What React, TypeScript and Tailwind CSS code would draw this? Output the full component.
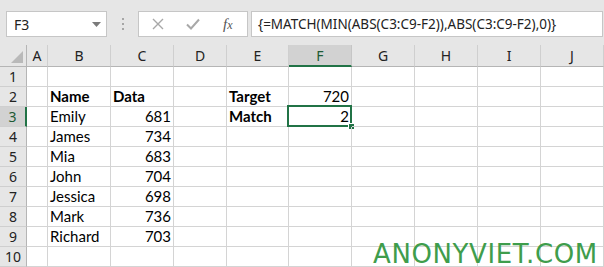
import React from "react";

const cols = ["A", "B", "C", "D", "E", "F", "G", "H", "I", "J"];

type Cell = { t?: string; b?: boolean; r?: boolean };

const rows: Record<number, Record<string, Cell>> = {
  2: { B: { t: "Name", b: true }, C: { t: "Data", b: true }, E: { t: "Target", b: true }, F: { t: "720", r: true } },
  3: { B: { t: "Emily" }, C: { t: "681", r: true }, E: { t: "Match", b: true }, F: { t: "2", r: true } },
  4: { B: { t: "James" }, C: { t: "734", r: true } },
  5: { B: { t: "Mia" }, C: { t: "683", r: true } },
  6: { B: { t: "John" }, C: { t: "704", r: true } },
  7: { B: { t: "Jessica" }, C: { t: "698", r: true } },
  8: { B: { t: "Mark" }, C: { t: "736", r: true } },
  9: { B: { t: "Richard" }, C: { t: "703", r: true } },
};

const cellFont = { fontFamily: "Lato, 'Liberation Sans', sans-serif" };
const uiFont = { fontFamily: "'Noto Sans', 'Open Sans', sans-serif" };

export default function App() {
  return (
    <div className="w-[604px] h-[267px] overflow-hidden bg-white relative">
      {/* Formula bar area */}
      <div className="h-[45px] bg-[#e6e6e6] flex items-start pt-[11px] pl-[6px] pr-[1px]">
        <div
          className="w-[101px] h-[26px] bg-white border border-[#c6c6c6] flex items-center justify-between pl-[7px] pr-[5px] text-[14px] text-[#222]"
          style={uiFont}
        >
          <span>F3</span>
          <svg width="9" height="5" viewBox="0 0 9 5">
            <path d="M0 0 H9 L4.5 5 Z" fill="#7a7a7a" />
          </svg>
        </div>
        <div className="w-[31px] h-[26px] flex flex-col items-center justify-center gap-[3px]">
          <span className="w-[2px] h-[2px] bg-[#a6a6a6]" />
          <span className="w-[2px] h-[2px] bg-[#a6a6a6]" />
          <span className="w-[2px] h-[2px] bg-[#a6a6a6]" />
        </div>
        <div className="w-[110px] h-[26px] bg-white border border-[#c6c6c6] flex items-center">
          <svg className="ml-[13px]" width="12" height="12" viewBox="0 0 12 12">
            <path d="M1 1 L11 11 M11 1 L1 11" stroke="#a8a8a8" strokeWidth="1.4" />
          </svg>
          <svg className="ml-[22px]" width="14" height="12" viewBox="0 0 14 12">
            <path d="M1 6.5 L5 10.5 L13 1.5" stroke="#a8a8a8" strokeWidth="2" fill="none" />
          </svg>
          <span
            className="ml-[23px] text-[15px] italic text-[#555] leading-none"
            style={{ fontFamily: "'Liberation Serif', serif" }}
          >
            f<span className="text-[12px]">x</span>
          </span>
        </div>
        <div
          className="ml-[3px] flex-1 h-[26px] bg-white border border-[#c6c6c6] flex items-center pl-[6px] text-[13.5px] text-[#222] whitespace-nowrap"
          style={uiFont}
        >
          {"{=MATCH(MIN(ABS(C3:C9-F2)),ABS(C3:C9-F2),0)}"}
        </div>
      </div>

      {/* Grid */}
      <div className="grid grid-cols-[27px_21px_63px_63px_53px_62px_63px_63px_63px_63px_1fr]">
        {/* header row */}
        <div className="h-[22px] bg-[#e6e6e6] border-r border-b border-[#b5b5b5] relative">
          <svg className="absolute right-[3px] bottom-[3px]" width="12" height="12" viewBox="0 0 12 12">
            <path d="M12 0 V12 H0 Z" fill="#b9b9b9" />
          </svg>
        </div>
        {cols.map((c) => {
          const sel = c === "F";
          return (
            <div
              key={c}
              className={
                "h-[22px] flex items-center justify-center text-[14px] border-r " +
                (sel
                  ? "bg-[#d2d2d2] text-[#1d5a34] border-b-2 border-b-[#217346] border-r-[#c6c6c6]"
                  : "bg-[#e6e6e6] text-[#222] border-b border-b-[#b5b5b5] border-r-[#cfcfcf]")
              }
              style={uiFont}
            >
              {c}
            </div>
          );
        })}

        {Array.from({ length: 10 }, (_, i) => i + 1).map((r) => (
          <React.Fragment key={r}>
            <div
              className={
                "h-[20px] flex items-center justify-center text-[14px] border-b border-b-[#cfcfcf] " +
                (r === 3
                  ? "bg-[#d2d2d2] text-[#1d5a34] border-r-2 border-r-[#217346]"
                  : "bg-[#e6e6e6] text-[#222] border-r border-r-[#b5b5b5]")
              }
              style={uiFont}
            >
              {r}
            </div>
            {cols.map((c) => {
              const cell = rows[r]?.[c];
              const sel = r === 3 && c === "F";
              return (
                <div
                  key={c}
                  className={
                    "h-[20px] border-r border-b border-[#d4d4d4] flex items-center px-[2px] text-[15px] text-black whitespace-nowrap relative " +
                    (cell?.r ? "justify-end " : "justify-start ") +
                    (cell?.b ? "font-bold" : "")
                  }
                  style={cellFont}
                >
                  {cell?.t}
                  {sel && (
                    <>
                      <div className="absolute -left-[2px] -top-[2px] -right-[1px] -bottom-[1px] border-2 border-[#217346]" />
                      <div className="absolute -right-[4px] -bottom-[4px] w-[7px] h-[7px] bg-[#217346] border border-white" />
                    </>
                  )}
                </div>
              );
            })}
          </React.Fragment>
        ))}
      </div>

      {/* watermark */}
      <div
        className="absolute left-[373px] top-[241px] text-[26px] leading-none text-[#3f9d4c] tracking-[0.6px]"
        style={{ fontFamily: "'DejaVu Sans', sans-serif" }}
      >
        ANONYVIET.COM
      </div>
    </div>
  );
}
